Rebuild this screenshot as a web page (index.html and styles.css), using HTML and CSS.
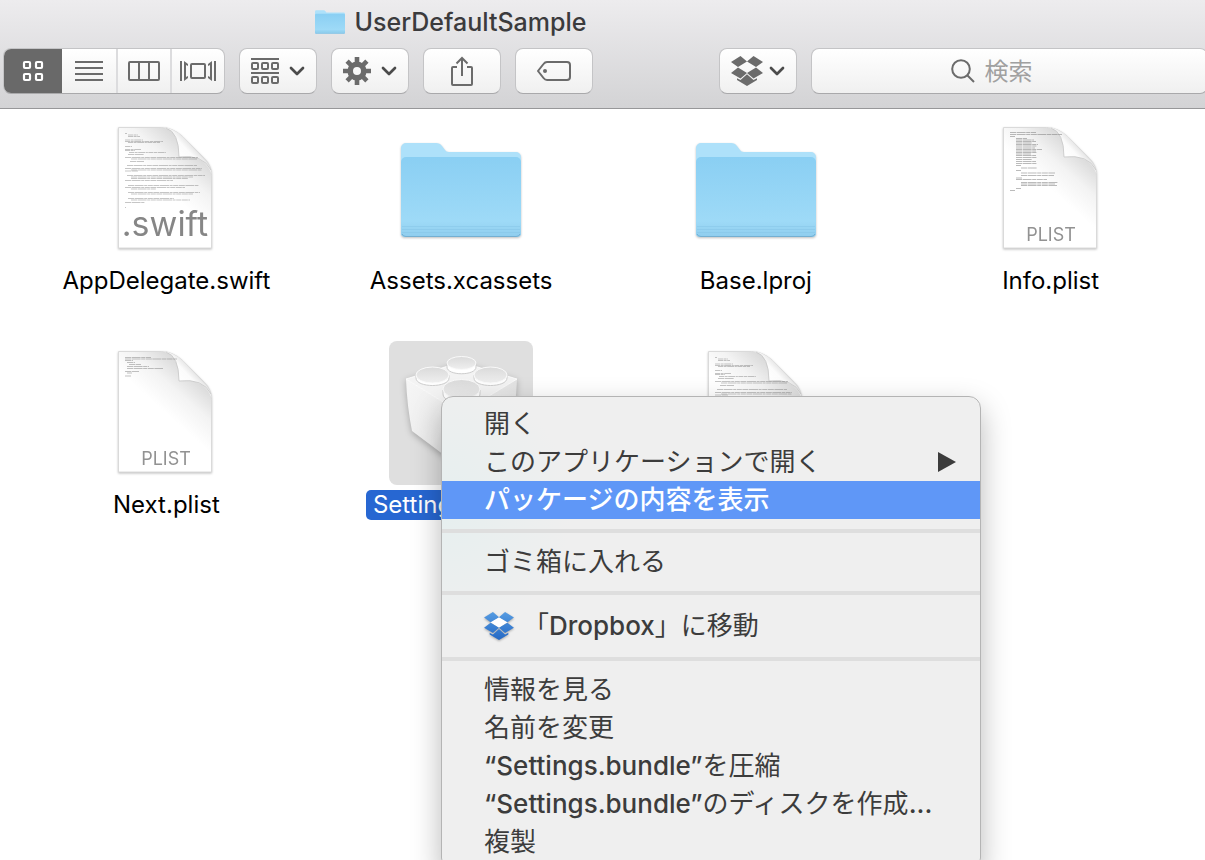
FILE: index.html
```html
<!DOCTYPE html>
<html lang="ja">
<head>
<meta charset="utf-8">
<title>UserDefaultSample</title>
<link rel="stylesheet" href="styles.css">
</head>
<body>
<svg class="defs" aria-hidden="true">
  <defs>
    <linearGradient id="folder-front" x1="0" y1="0" x2="0" y2="1">
      <stop offset="0" stop-color="#8acff3"/><stop offset=".8" stop-color="#9edaf7"/><stop offset="1" stop-color="#8fcdee"/>
    </linearGradient>
    <linearGradient id="page-fill" gradientUnits="userSpaceOnUse" x1="66" y1="66" x2="98" y2="30">
      <stop offset="0" stop-color="#fff"/><stop offset=".5" stop-color="#f3f3f3"/><stop offset="1" stop-color="#d8d8d8"/>
    </linearGradient>
    <linearGradient id="curl-fill" gradientUnits="userSpaceOnUse" x1="85" y1="40" x2="99" y2="27">
      <stop offset="0" stop-color="#fff"/><stop offset=".6" stop-color="#fbfbfb"/><stop offset="1" stop-color="#e2e2e2"/>
    </linearGradient>
    <linearGradient id="brick-left" x1="0" y1="0" x2="1" y2="1">
      <stop offset="0" stop-color="#f6f6f6"/><stop offset=".6" stop-color="#ececec"/><stop offset="1" stop-color="#cfcfcf"/>
    </linearGradient>
    <linearGradient id="brick-right" x1="1" y1="0" x2="0" y2="1">
      <stop offset="0" stop-color="#e2e2e2"/><stop offset="1" stop-color="#fafafa"/>
    </linearGradient>
    <linearGradient id="stud-top" x1="0" y1="0" x2="0" y2="1">
      <stop offset="0" stop-color="#dadada"/><stop offset="1" stop-color="#efefef"/>
    </linearGradient>
    <linearGradient id="box-blue" x1="0" y1="0" x2="0" y2="1">
      <stop offset="0" stop-color="#569ce2"/><stop offset="1" stop-color="#2468c4"/>
    </linearGradient>
    <symbol id="folder" viewBox="0 0 144 144">
      <path d="M12 118V31a5 5 0 0 1 5-5h30q4 0 6 3l3 4q1 2 4 2h67a5 5 0 0 1 5 5v78z" fill="#aee1fa"/>
      <path d="M12 45a5 5 0 0 1 5-5h110a5 5 0 0 1 5 5v71a4 4 0 0 1-4 4H16a4 4 0 0 1-4-4z" fill="url(#folder-front)"/>
      <path d="M13 109.500h118M13 112.500h118M13 115.500h118" stroke="#7fc0e4" stroke-opacity=".4"/>
      <path d="M13 117q1 2.500 4 2.500h110q3 0 4-2.500" fill="none" stroke="#74afd1"/>
    </symbol>
    <symbol id="page" viewBox="0 0 144 144">
      <path d="M24.500 9.500h43q11 0 21 9l22 22q7 7 7 17v72.500h-93z" fill="url(#page-fill)" stroke="#dadada"/>
      <path d="M68 9.500q17 1 17 29.500 25-3 32.500 17-1-8-6.500-14L89 19q-10-9.500-21-9.500z" fill="url(#curl-fill)"/>
      <path d="M72 10q13 4 13 29 24-3 32 13" fill="none" stroke="#c6c6c6" stroke-width=".8"/>
    </symbol>
    <symbol id="code-head" viewBox="0 0 144 144">
      <g fill="none" stroke="#777" stroke-opacity=".42" stroke-width="1" stroke-dasharray="5 .6 3 .6 7 .6 2 .6">
        <path d="M31 15.500h2M34 17h10M34 18.500h12M31 22h18M31 23.500h38M34 24.500h32M31 28.500h7M31 31.500h16M31 32.500h10M35 34.500h37"/>
      </g>
    </symbol>
    <symbol id="code-body" viewBox="0 0 144 144">
      <g fill="none" stroke="#777" stroke-opacity=".42" stroke-width="1" stroke-dasharray="6 .6 9 .6 3 .6 5 .6">
        <path d="M34 36.500h16M31 39.500h73M37 41h66M36 43.500h14M33 47.500h70M31 50.500h77M37 52h71M31 53h13M33 57.500h78M37 59h62M37 60.500h57M31 62.500h48M34 67.500h71M31 69.500h60M37 71h25M34 74.500h72M37 76h62M34 80.500h46M37 82h59M31 84.500h20M31 89.500h1"/>
      </g>
    </symbol>
    <symbol id="chevron" viewBox="0 0 16 10">
      <path d="M2 2l6 6 6-6" fill="none" stroke="#4b4b4b" stroke-width="2.700" stroke-linecap="round" stroke-linejoin="round"/>
    </symbol>
    <symbol id="boxlogo" viewBox="0 0 32 30">
      <path d="M9.500 0L0 6l7 5 9-5.500zM22.500 0L32 6l-7 5-9-5.500zM0 17l7-5.500 9 5.500-6.500 5.500zM32 17l-7-5.500-9 5.500 6.500 5.500zM6 22.200L9.500 24l6.500-5.800 6.500 5.800 3.500-1.800V24l-10 6-10-6z"/>
    </symbol>
  </defs>
</svg>

<div class="window">
  <header class="toolbar">
    <h1 class="title">
      <svg class="title-icon" viewBox="12 26 120 95"><use href="#folder" width="144" height="144"/></svg>
      UserDefaultSample
    </h1>
    <div class="controls">
      <div class="segments">
        <button class="segment segment-on" aria-label="アイコン">
          <svg width="22" height="22" viewBox="0 0 22 22" fill="none" stroke="#fff" stroke-width="2.200"><rect x="2" y="2" width="6" height="6" rx="1"/><rect x="14" y="2" width="6" height="6" rx="1"/><rect x="2" y="14" width="6" height="6" rx="1"/><rect x="14" y="14" width="6" height="6" rx="1"/></svg>
        </button>
        <button class="segment" aria-label="リスト">
          <svg width="28" height="20" viewBox="0 0 28 20" stroke="#6b6b6b" stroke-width="2"><path d="M0 1h28M0 7h28M0 13h28M0 19h28"/></svg>
        </button>
        <button class="segment" aria-label="カラム">
          <svg width="32" height="20" viewBox="0 0 32 20" fill="none" stroke="#6b6b6b" stroke-width="2"><rect x="1" y="1" width="30" height="18" rx="1"/><path d="M11 1v18M21 1v18"/></svg>
        </button>
        <button class="segment" aria-label="Cover Flow">
          <svg width="36" height="20" viewBox="0 0 36 20" fill="none" stroke="#6b6b6b" stroke-width="2"><rect x="11" y="3" width="14" height="14" rx="1"/><path d="M1 0v20M35 0v20"/><path d="M4 0v20l4-3v-2l-2 1V4l2 1V3zM32 0v20l-4-3v-2l2 1V4l-2 1V3z" fill="#6b6b6b" stroke="none"/></svg>
        </button>
      </div>
      <button class="tool" aria-label="グループ">
        <svg width="28" height="26" viewBox="0 0 28 26" fill="none" stroke="#6b6b6b" stroke-width="2"><path d="M0 1h28M0 15h28"/><rect x="1" y="5" width="6" height="6" rx="1"/><rect x="11" y="5" width="6" height="6" rx="1"/><rect x="21" y="5" width="6" height="6" rx="1"/><rect x="1" y="19" width="6" height="6" rx="1"/><rect x="11" y="19" width="6" height="6" rx="1"/><rect x="21" y="19" width="6" height="6" rx="1"/></svg>
        <svg class="chevron"><use href="#chevron"/></svg>
      </button>
      <button class="tool" aria-label="アクション">
        <svg width="28" height="28" viewBox="-14 -14 28 28" fill="none" stroke="#6b6b6b"><circle r="6.800" stroke-width="5.600"/><path d="M0-8v-6M0 8v6M-8 0h-6M8 0h6M5.700-5.700l4.200-4.200M-5.700 5.700l-4.200 4.200M-5.700-5.700l-4.200-4.200M5.700 5.700l4.200 4.200" stroke-width="4.600"/></svg>
        <svg class="chevron"><use href="#chevron"/></svg>
      </button>
      <button class="tool" aria-label="共有">
        <svg width="24" height="32" viewBox="0 0 24 32" fill="none" stroke="#6b6b6b" stroke-width="2"><path d="M7 12H3q-1 0-1 1v16q0 1 1 1h18q1 0 1-1V13q0-1-1-1h-4M12 21V3M6.500 8.500L12 3l5.500 5.500"/></svg>
      </button>
      <button class="tool" aria-label="タグ">
        <svg width="34" height="20" viewBox="0 0 34 20" fill="none" stroke="#6b6b6b" stroke-width="2"><path d="M10 1h20q3 0 3 3v12q0 3-3 3H10q-2 0-3.500-2L1 10l5.500-7Q8 1 10 1z"/><circle cx="8" cy="10" r="2" fill="#6b6b6b" stroke="none"/></svg>
      </button>
      <div class="spacer"></div>
      <button class="tool tool-dropbox" aria-label="Dropbox">
        <svg width="32" height="30" fill="#6b6b6b"><use href="#boxlogo"/></svg>
        <svg class="chevron"><use href="#chevron"/></svg>
      </button>
      <label class="search">
        <svg width="24" height="24" viewBox="0 0 24 24" fill="none" stroke="#6b6b6b" stroke-width="2"><circle cx="10" cy="10" r="8.800"/><path d="M16.500 16.500l6.500 6.500"/></svg>
        <input class="search-input" type="text" placeholder="検索" aria-label="検索">
      </label>
    </div>
  </header>

  <main class="files">
    <button class="file">
      <svg class="file-icon page-icon" viewBox="0 -1 144 144"><use href="#page" width="144" height="144"/><use href="#code-head" width="144" height="144"/><use href="#code-body" width="144" height="144"/><text class="ext ext-swift" x="71" y="118">.swift</text></svg>
      <span class="file-name">AppDelegate.swift</span>
    </button>
    <button class="file">
      <svg class="file-icon folder-icon"><use href="#folder"/></svg>
      <span class="file-name">Assets.xcassets</span>
    </button>
    <button class="file">
      <svg class="file-icon folder-icon"><use href="#folder"/></svg>
      <span class="file-name">Base.lproj</span>
    </button>
    <button class="file">
      <svg class="file-icon page-icon" viewBox="0 -1 144 144"><use href="#page" width="144" height="144"/>
        <g stroke="#777" stroke-opacity=".5" stroke-dasharray="6 .6 9 .6 4 .6"><path d="M31 14.500h26M31 16.500h52M31 18.500h5M37 20.500h11M37 22h18M37 23.500h20M37 25h16M37 26.500h22M37 28h21M37 30h19M37 31.500h26M37 33h20M37 34.500h21M37 36h15M37 37.500h20M37 39.500h21M37 41.500h16M37 43.500h20M37 45.500h21M37 47.500h5M42 50h16M37 52.500h5M42 55h34M42 57.500h33M37 60h6M37 61.500h31M42 64.500h37M42 66h34M42 67.500h36M37 70.500h5M31 72.500h5"/></g>
        <text class="ext" x="72" y="123">PLIST</text></svg>
      <span class="file-name">Info.plist</span>
    </button>
    <button class="file">
      <svg class="file-icon page-icon" viewBox="0 -1 144 144"><use href="#page" width="144" height="144"/>
        <g stroke="#777" stroke-opacity=".45" stroke-dasharray="6 .6 9 .6 4 .6"><path d="M31 15.500h26M31 17h52M31 18.500h8M33 20.500h8M35 22.500h12M33 24.500h22M33 26.500h36M31 29.500h14M33 31h5M31 34h6"/></g>
        <text class="ext" x="72" y="123">PLIST</text></svg>
      <span class="file-name">Next.plist</span>
    </button>
    <button class="file file-selected">
      <svg class="file-icon brick-icon" viewBox="0 0 144 144">
        <g class="brick">
        <path d="M17 38l55 34v55L51 111 23 90q-5-25-6-52z" fill="url(#brick-left)"/>
        <path d="M128 38L72 72v55l50-37q5-25 6-52z" fill="url(#brick-right)"/>
        <path d="M17 38l55-17 56 17-56 34z" fill="#f3f3f3" stroke="#fff" stroke-width=".8"/>
        </g>
        <g fill="#fff" stroke="#cdcdcd" stroke-width="1">
          <path d="M58 22v4c0 9 29 9 29 0v-4z"/><path d="M27 34v3c0 10 33 10 33 0v-3z"/><path d="M85 34v3c0 10 33 10 33 0v-3z"/><path d="M54 49v4c0 12 37 12 37 0v-4z"/>
        </g>
        <g fill="url(#stud-top)" stroke="#fafafa" stroke-width="1">
          <ellipse cx="72.500" cy="22" rx="14.500" ry="6.500"/><ellipse cx="43.500" cy="34" rx="16.500" ry="8"/><ellipse cx="101.500" cy="34" rx="16.500" ry="8"/><ellipse cx="72.500" cy="48" rx="18.500" ry="9.500"/>
        </g>
      </svg>
      <span class="file-name">Settings.bundle</span>
    </button>
    <button class="file">
      <svg class="file-icon page-icon" viewBox="0 -1 144 144"><use href="#page" width="144" height="144"/><use href="#code-head" width="144" height="144"/><use href="#code-body" width="144" height="144"/></svg>
    </button>
  </main>

  <div class="menu" role="menu">
    <button class="menu-item" role="menuitem">開く</button>
    <button class="menu-item" role="menuitem">このアプリケーションで開く
      <svg class="submenu" width="18" height="20" viewBox="0 0 18 20"><path d="M0 0l18 10L0 20z" fill="#3c3c3c"/></svg>
    </button>
    <button class="menu-item menu-item-on" role="menuitem">パッケージの内容を表示</button>
    <hr class="separator">
    <button class="menu-item" role="menuitem">ゴミ箱に入れる</button>
    <hr class="separator">
    <button class="menu-item menu-item-icon" role="menuitem">
      <svg class="menu-logo" width="30" height="28"><path d="M15 5l9 5-9 6-9-6z" fill="#fff"/><use href="#boxlogo" fill="url(#box-blue)"/></svg>
      <span>「<span class="latin">Dropbox</span>」に移動</span>
    </button>
    <hr class="separator">
    <button class="menu-item" role="menuitem">情報を見る</button>
    <button class="menu-item" role="menuitem">名前を変更</button>
    <button class="menu-item" role="menuitem"><span><span class="latin">“Settings.bundle”</span>を圧縮</span></button>
    <button class="menu-item" role="menuitem"><span><span class="latin">“Settings.bundle”</span>のディスクを作成<span class="latin">...</span></span></button>
    <button class="menu-item" role="menuitem">複製</button>
  </div>
</div>
</body>
</html>
```
FILE: styles.css
```css
* {
  box-sizing: border-box;
}

body {
  margin: 0;
  background: #fff;
}

body,
button,
input {
  font-family: Inter, "Noto Sans CJK JP", sans-serif;
}

button {
  margin: 0;
  padding: 0;
  border: 0;
  background: none;
  color: inherit;
}

svg {
  flex: none;
}

.defs {
  position: absolute;
  width: 0;
  height: 0;
}

.window {
  position: relative;
  height: 100vh;
  overflow: hidden;
}

/* Toolbar */

.toolbar {
  padding-bottom: 14px;
  background: linear-gradient(#edecee, #d3d3d5);
  border-bottom: 1px solid #979799;
}

.title {
  display: flex;
  align-items: center;
  justify-content: center;
  gap: 10px;
  height: 48px;
  margin: 0;
  padding: 0 304px 4px 0;
  color: #3b3b3d;
  font-size: 25px;
  font-weight: 500;
  line-height: 44px;
}

.title-icon {
  width: 30px;
  height: 24px;
}

.controls {
  display: flex;
  gap: 14px;
  margin: 0 -3px 0 3px;
}

.segments,
.tool,
.search {
  height: 46px;
  border: 1px solid #c4c4c6;
  border-bottom-color: #a9a9ab;
  border-radius: 8px;
  background: linear-gradient(#fff, #f0f0f0);
}

.segments {
  display: flex;
  flex: none;
  overflow: hidden;
}

.segment {
  display: flex;
  align-items: center;
  justify-content: center;
  width: 54px;
  border-left: 2px solid #dcdcde;
}

.segment-on {
  width: 58px;
  border-left: 0;
  background: #696969;
}

.segment-on + .segment {
  border-left: 0;
}

.tool {
  display: flex;
  flex: none;
  align-items: center;
  justify-content: center;
  gap: 10px;
  width: 78px;
}

.tool-dropbox {
  gap: 6px;
}

.chevron {
  width: 16px;
  height: 10px;
}

.spacer {
  flex: none;
  width: 98px;
}

.search {
  display: flex;
  flex: 1;
  align-items: center;
  justify-content: center;
  gap: 10px;
}

.search-input {
  width: 84px;
  padding: 0;
  border: 0;
  outline: 0;
  background: none;
  font-size: 24px;
}

.search-input::placeholder {
  color: #a0a0a0;
}

/* Icon grid */

.files {
  display: grid;
  grid-template-columns: repeat(4, 1fr);
  row-gap: 45px;
  padding: 8px 7px 0 19px;
}

.file {
  display: flex;
  flex-direction: column;
  align-items: center;
  gap: 5px;
}

.file-icon {
  width: 144px;
  height: 144px;
  border-radius: 8px;
}

.page-icon,
.folder-icon {
  filter: drop-shadow(0 1px 1px rgb(0 0 0 / 25%));
}

.brick {
  filter: drop-shadow(0 2px 3px rgb(0 0 0 / 25%));
}

.ext {
  fill: #929292;
  font-size: 18px;
  text-anchor: middle;
}

.ext-swift {
  fill: #868686;
  font-size: 34px;
}

.file-name {
  padding: 0 7px;
  border-radius: 5px;
  color: #000;
  font-size: 24px;
  line-height: 30px;
}

.file-selected .file-icon {
  background: #dfdfdf;
}

.file-selected .file-name {
  background: #2767d2;
  color: #fff;
}

/* Context menu */

.menu {
  position: absolute;
  top: 396px;
  left: 441px;
  width: 540px;
  padding: 8px 0;
  border: 1px solid #b4b4b4;
  border-radius: 12px;
  background: radial-gradient(circle at 0 110px, #e6efef, #efefef 130px);
  box-shadow: 0 12px 30px rgb(0 0 0 / 28%);
  color: #3c3c3c;
}

.menu-item {
  display: flex;
  align-items: center;
  justify-content: space-between;
  width: 100%;
  height: 38px;
  padding: 0 24px 0 42px;
  font-size: 26px;
  line-height: 38px;
  text-align: left;
  white-space: nowrap;
}

.menu-item-on {
  background: #5f97f7;
  color: #fff;
  font-weight: 500;
}

.menu-item-icon {
  justify-content: flex-start;
  gap: 9px;
  height: 42px;
}

.latin {
  font-weight: 500;
}

.menu-logo {
  filter: drop-shadow(0 1px 1px rgb(0 0 0 / 30%));
}

.separator {
  height: 4px;
  margin: 10px 0;
  border: 0;
  background: #dedede;
}
```
